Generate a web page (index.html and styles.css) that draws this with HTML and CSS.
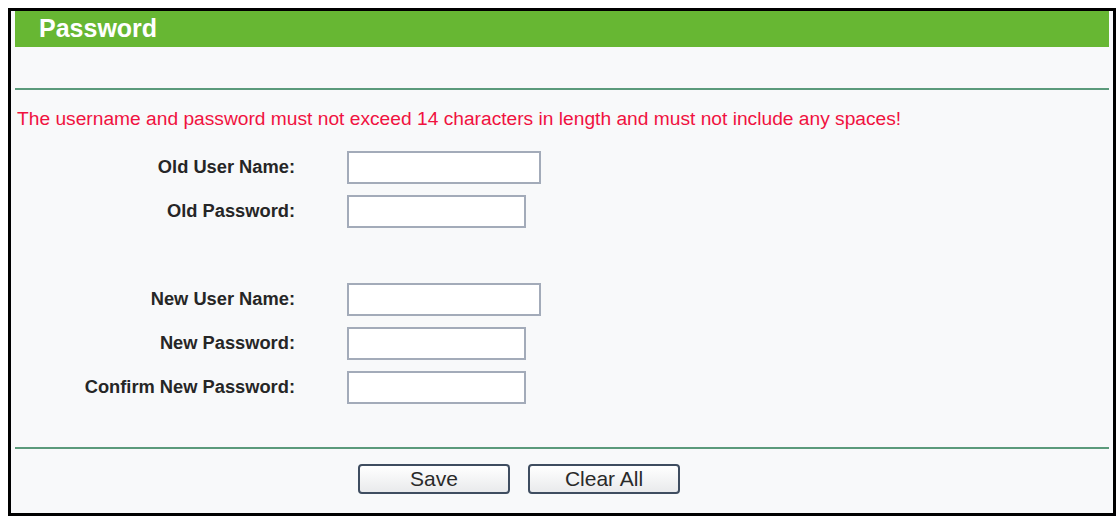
FILE: index.html
```html
<!DOCTYPE html>
<html>
<head>
    <meta charset="UTF-8">
    <title>Password</title>
    <link rel="stylesheet" href="styles.css">
</head>
<body>
    <div class="panel">
        <div class="panel-title">Password</div>
        <div class="panel-gap"></div>
        <div class="divider"></div>

        <div class="notice">The username and password must not exceed 14 characters in length and must not include any spaces!</div>

        <div class="form-row">
            <label class="form-label" for="oldName">Old User Name:</label>
            <input type="text" class="field field-wide" id="oldName">
        </div>
        <div class="form-row">
            <label class="form-label" for="oldPwd">Old Password:</label>
            <input type="password" class="field" id="oldPwd">
        </div>
        <div class="form-row"></div>
        <div class="form-row">
            <label class="form-label" for="newName">New User Name:</label>
            <input type="text" class="field field-wide" id="newName">
        </div>
        <div class="form-row">
            <label class="form-label" for="newPwd">New Password:</label>
            <input type="password" class="field" id="newPwd">
        </div>
        <div class="form-row">
            <label class="form-label" for="confirmPwd">Confirm New Password:</label>
            <input type="password" class="field" id="confirmPwd">
        </div>

        <div class="divider divider-bottom"></div>

        <div class="actions">
            <button class="btn">Save</button>
            <button class="btn">Clear All</button>
        </div>
    </div>
</body>
</html>
```

FILE: styles.css
```css
body {
    margin: 0;
    background-color: #ffffff;
    font-family: "Liberation Sans", Arial, sans-serif;
    color: #222;
}

.panel {
    margin: 8px 2px 2px 8px;
    height: 508px;
    box-sizing: border-box;
    border: 3px solid #000;
    padding: 0 4px;
    background-color: #f8f9fa;
}

.panel-title {
    height: 36px;
    box-sizing: border-box;
    padding: 3px 0 0 24px;
    background-color: #67b733;
    color: #fff;
    font-size: 25px;
    font-weight: bold;
    line-height: 28px;
}

.panel-gap {
    height: 41px;
}

.divider {
    height: 2px;
    background-color: #5b9a7b;
}

.divider-bottom {
    margin-top: 38px;
}

.notice {
    height: 55px;
    box-sizing: border-box;
    padding: 18px 0 0 2px;
    color: #f0123f;
    font-size: 19.2px;
    line-height: 22px;
    white-space: nowrap;
}

.form-row {
    display: flex;
    align-items: center;
    height: 44px;
}

.form-label {
    width: 280px;
    text-align: right;
    font-size: 18.3px;
    font-weight: bold;
    color: #262626;
}

.field {
    margin-left: 52px;
    width: 179px;
    height: 33px;
    box-sizing: border-box;
    border: 2px solid #a3abb9;
    background: #fff;
    padding: 2px 4px;
    font-family: inherit;
    font-size: 16px;
    outline: none;
}

.field-wide {
    width: 194px;
}

.actions {
    display: flex;
    gap: 18px;
    padding: 15px 0 0 343px;
}

.btn {
    width: 152px;
    height: 30px;
    box-sizing: border-box;
    border: 2px solid #3f4d60;
    border-radius: 4px;
    background: linear-gradient(#ffffff, #e9eaec);
    color: #2a2a2a;
    font-family: inherit;
    font-size: 21px;
    line-height: 24px;
    padding: 0;
    cursor: pointer;
}
```
